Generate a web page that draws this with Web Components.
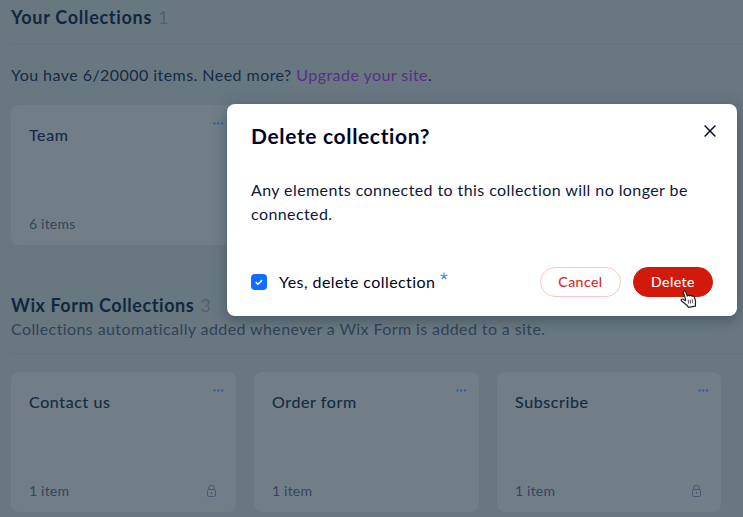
<!DOCTYPE html>
<html lang="en">
<head>
<meta charset="utf-8">
<title>Collections</title>
<style>
    html, body {
        margin: 0;
        height: 100%;
        overflow: hidden;
    }
    body {
        background: #697780;
        font-family: Lato, "Liberation Sans", sans-serif;
        font-size: 16px;
        line-height: 24px;
        color: #142c44;
    }
</style>
</head>
<body>
<collections-page></collections-page>

<script>
class CollectionCard extends HTMLElement {
    constructor() {
        super();
        this.attachShadow({ mode: 'open' });
        this.shadowRoot.innerHTML = `
            <style>
                :host {
                    display: flex;
                    flex-direction: column;
                    justify-content: space-between;
                    box-sizing: border-box;
                    height: 140px;
                    padding: 18px 18px 9px;
                    border-radius: 8px;
                    background: #717e87;
                    position: relative;
                }
                .title {
                    color: #132b43;
                    -webkit-text-stroke: 0.15px #132b43;
                    letter-spacing: 0.62px;
                }
                .footer {
                    display: flex;
                    align-items: center;
                    justify-content: space-between;
                    font-size: 14px;
                    color: #33465c;
                    letter-spacing: 0.2px;
                }
                .menu {
                    position: absolute;
                    top: 17px;
                    right: 12px;
                    display: block;
                }
                .lock {
                    display: none;
                    margin: 0 1px 0 0;
                }
                :host([locked]) .lock {
                    display: block;
                }
            </style>
            <svg class="menu" width="11" height="3" viewBox="0 0 11 3" fill="#2f5a9f">
                <circle cx="1.5" cy="1.5" r="1.15"/><circle cx="5.3" cy="1.5" r="1.15"/><circle cx="9.1" cy="1.5" r="1.15"/>
            </svg>
            <div class="title"><slot></slot></div>
            <div class="footer">
                <slot name="count"></slot>
                <svg class="lock" width="11" height="14" viewBox="0 0 11 14" fill="none" stroke="#495873">
                    <rect x="1.5" y="5.5" width="8" height="7" rx="1.2"/>
                    <path d="M2.7 5.5V4a2.8 2.8 0 0 1 5.6 0v1.5M5.5 8v2"/>
                </svg>
            </div>
        `;
    }
}

class CollectionSection extends HTMLElement {
    constructor() {
        super();
        this.attachShadow({ mode: 'open' });
        this.shadowRoot.innerHTML = `
            <style>
                :host {
                    display: block;
                }
                h2 {
                    display: flex;
                    gap: 6px;
                    margin: 0;
                    font-size: 18px;
                    line-height: 24px;
                    font-weight: 700;
                    letter-spacing: var(--heading-spacing, 0.6px);
                    color: #10283f;
                }
                .count {
                    font-weight: 400;
                    letter-spacing: 0;
                    color: #4f6076;
                }
                .rule {
                    height: 1px;
                    background: #65727c;
                }
                .cards {
                    display: grid;
                    grid-template-columns: 225px 225px 224px;
                    gap: 18px;
                }
            </style>
            <h2><slot name="heading"></slot><span class="count"><slot name="total"></slot></span></h2>
            <slot name="subtitle"></slot>
            <div class="rule"></div>
            <slot name="note"></slot>
            <div class="cards"><slot></slot></div>
        `;
    }
}

class PillButton extends HTMLElement {
    constructor() {
        super();
        this.attachShadow({ mode: 'open' });
        this.shadowRoot.innerHTML = `
            <style>
                :host {
                    display: flex;
                    align-items: center;
                    justify-content: center;
                    box-sizing: border-box;
                    width: 81px;
                    height: 30px;
                    border: 1px solid #fbc8c4;
                    border-radius: 15px;
                    background: #fff;
                    color: #e0221a;
                    font-size: 14px;
                    letter-spacing: 0.5px;
                    -webkit-text-stroke: 0.12px currentColor;
                }
                :host([primary]) {
                    width: 80px;
                    border-color: #d11a0b;
                    background: #d11a0b;
                    color: #fff;
                }
            </style>
            <slot></slot>
        `;
    }
}

class CheckOption extends HTMLElement {
    constructor() {
        super();
        this.attachShadow({ mode: 'open' });
        this.shadowRoot.innerHTML = `
            <style>
                :host {
                    display: flex;
                    align-items: center;
                    letter-spacing: 0.43px;
                }
                .box {
                    display: block;
                    margin-right: 12px;
                }
                .star {
                    margin: 0 0 3px 5px;
                }
            </style>
            <svg class="box" width="16" height="16" viewBox="0 0 16 16">
                <rect width="16" height="16" rx="4" fill="#116dff"/>
                <path d="M4.7 8.1l2.3 2.1 4.1-4.1" fill="none" stroke="#fff" stroke-width="1.5"/>
            </svg>
            <slot></slot>
            <svg class="star" width="8" height="17" viewBox="0 0 8 17" fill="none" stroke="#3b82ff" stroke-width="1.1">
                <path d="M4 .4v3.8M.6 2.9L4 4.2l3.4-1.3M1.8 7.2L4 4.2l2.2 3"/>
            </svg>
        `;
    }
}

class ConfirmDialog extends HTMLElement {
    constructor() {
        super();
        this.attachShadow({ mode: 'open' });
        this.shadowRoot.innerHTML = `
            <style>
                :host {
                    display: flex;
                    flex-direction: column;
                    box-sizing: border-box;
                    width: 510px;
                    height: 212px;
                    padding: 17px 24px 19px;
                    border-radius: 8px;
                    background: #fff;
                    color: #000624;
                    box-shadow: 0 6px 8px rgba(22, 45, 61, 0.22), 0 0 18px rgba(22, 45, 61, 0.2);
                }
                header {
                    display: flex;
                    justify-content: space-between;
                }
                h1 {
                    margin: 0;
                    font-size: 21px;
                    line-height: 30px;
                    font-weight: 700;
                    letter-spacing: 0.65px;
                }
                .close {
                    display: block;
                    margin: 4px -3px 0 0;
                }
                .body {
                    margin-top: 27px;
                    letter-spacing: 0.41px;
                    color: #10183a;
                }
                footer {
                    display: flex;
                    align-items: center;
                    justify-content: space-between;
                    margin-top: auto;
                }
                .actions {
                    display: flex;
                    gap: 12px;
                }
            </style>
            <header>
                <h1><slot name="title"></slot></h1>
                <svg class="close" width="12" height="12" viewBox="0 0 12 12" fill="none" stroke="#000624" stroke-width="1.4">
                    <path d="M.6.6l10.8 10.8M11.4.6L.6 11.4"/>
                </svg>
            </header>
            <div class="body"><slot></slot></div>
            <footer>
                <slot name="option"></slot>
                <div class="actions"><slot name="actions"></slot></div>
            </footer>
        `;
    }
}

class HandCursor extends HTMLElement {
    constructor() {
        super();
        this.attachShadow({ mode: 'open' });
        this.shadowRoot.innerHTML = `
            <style>
                :host {
                    display: block;
                }
                svg {
                    display: block;
                }
            </style>
            <svg width="17" height="18" viewBox="0 0 17 18">
                <path d="M5.6 9.6L3.5 2.6C3 .8 5.2.2 5.8 2l1.5 4.1c.2-1.2 2-1.3 2.4-.1.5-1 2-.8 2.4.4.7-.8 2-.3 2.3.7l1 3.2c.4 1.4 0 2.5-.1 3.6l.2 2.2-7.3 1.2-.9-1.9L1.5 11C.5 9.6 1.9 8.6 3.1 9.2l2.3 1.5z" fill="#fff" stroke="#222" stroke-width="1.2" stroke-linejoin="round"/>
                <path d="M8.2 9.7l.4 4M10.2 9.5l.4 4M12.2 9.3l.4 4" stroke="#444" stroke-width=".9"/>
            </svg>
        `;
    }
}

class CollectionsPage extends HTMLElement {
    constructor() {
        super();
        this.attachShadow({ mode: 'open' });
        this.shadowRoot.innerHTML = `
            <style>
                :host {
                    display: block;
                    position: relative;
                    box-sizing: border-box;
                    height: 517px;
                    padding: 5px 0 0 11px;
                    overflow: hidden;
                }
                .mine {
                    --heading-spacing: 0.7px;
                }
                .spacer {
                    height: 14px;
                }
                .note {
                    margin: 19px 0 18px;
                    letter-spacing: 0.45px;
                }
                .note a {
                    color: #55318a;
                }
                .forms {
                    margin-top: 48px;
                    --heading-spacing: 0.56px;
                }
                .subtitle {
                    height: 36px;
                    color: #2f4359;
                    letter-spacing: 0.4px;
                }
                .gap {
                    height: 18px;
                }
                confirm-dialog {
                    position: absolute;
                    left: 227px;
                    top: 104px;
                }
                hand-cursor {
                    position: absolute;
                    left: 680px;
                    top: 290px;
                }
            </style>
            <collection-section class="mine">
                <span slot="heading">Your Collections</span>
                <span slot="total">1</span>
                <div class="spacer" slot="subtitle"></div>
                <div class="note" slot="note">You have 6/20000 items. Need more? <a>Upgrade your site</a>.</div>
                <collection-card>Team<span slot="count">6 items</span></collection-card>
            </collection-section>
            <collection-section class="forms">
                <span slot="heading">Wix Form Collections</span>
                <span slot="total">3</span>
                <div class="subtitle" slot="subtitle">Collections automatically added whenever a Wix Form is added to a site.</div>
                <div class="gap" slot="note"></div>
                <collection-card locked>Contact us<span slot="count">1 item</span></collection-card>
                <collection-card>Order form<span slot="count">1 item</span></collection-card>
                <collection-card locked>Subscribe<span slot="count">1 item</span></collection-card>
            </collection-section>
            <confirm-dialog>
                <span slot="title">Delete collection?</span>
                Any elements connected to this collection will no longer be connected.
                <check-option slot="option">Yes, delete collection</check-option>
                <pill-button slot="actions">Cancel</pill-button>
                <pill-button slot="actions" primary>Delete</pill-button>
            </confirm-dialog>
            <hand-cursor></hand-cursor>
        `;
    }
}

customElements.define('collection-card', CollectionCard);
customElements.define('collection-section', CollectionSection);
customElements.define('pill-button', PillButton);
customElements.define('check-option', CheckOption);
customElements.define('confirm-dialog', ConfirmDialog);
customElements.define('hand-cursor', HandCursor);
customElements.define('collections-page', CollectionsPage);
</script>
</body>
</html>
